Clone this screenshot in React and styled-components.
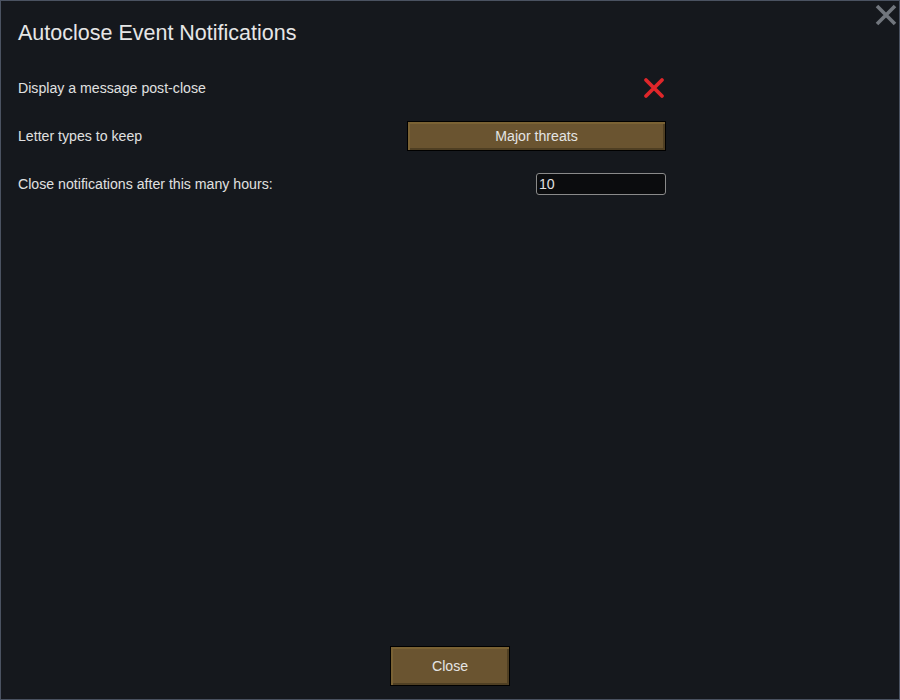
import React from "react";
import styled, { createGlobalStyle } from "styled-components";

const Global = createGlobalStyle`
  html, body { margin: 0; padding: 0; background: #15181d; }
  body { font-family: "Liberation Sans", Arial, sans-serif; }
`;

const Window = styled.div`
  position: relative;
  box-sizing: border-box;
  width: 900px;
  height: 700px;
  border: 1px solid #4a5261;
  background: #15181d;
  display: flex;
  flex-direction: column;
  padding: 0 0 13px 17px;
  color: #dedede;
`;

const Title = styled.h1`
  margin: 0;
  height: 63px;
  display: flex;
  align-items: center;
  padding-top: 2px;
  box-sizing: border-box;
  font-size: 21.5px;
  font-weight: normal;
  color: #e6e6e6;
`;

const Rows = styled.div`
  width: 648px;
  display: flex;
  flex-direction: column;
`;

const Row = styled.div`
  height: 48px;
  display: flex;
  align-items: center;
  justify-content: space-between;
`;

const Label = styled.span`
  font-size: 14.15px;
  color: #e0e0e0;
`;

const WoodButton = styled.button`
  box-sizing: border-box;
  width: ${(p) => p.$w}px;
  height: ${(p) => p.$h}px;
  border: 1px solid #000;
  background: #6a5430;
  box-shadow: inset 2px 2px 0 #7a6234, inset -2px -2px 0 #4f3f23;
  color: #e4e4e4;
  font-family: "Liberation Sans", Arial, sans-serif;
  font-size: 14.15px;
  padding: 0;
  cursor: pointer;
`;

const Input = styled.div`
  box-sizing: border-box;
  width: 130px;
  height: 22px;
  border: 1px solid #8a8a8a;
  border-radius: 3px;
  background: #0b0c0e;
  color: #e0e0e0;
  font-size: 14.15px;
  display: flex;
  align-items: center;
  padding-left: 2px;
`;

const Spacer = styled.div`
  flex: 1;
`;

const Footer = styled.div`
  display: flex;
  justify-content: center;
  margin-left: -17px;
`;

const CloseIcon = styled.svg`
  position: absolute;
  top: 3px;
  right: 2px;
`;

const CrossIcon = styled.svg`
  margin-right: 1px;
  display: block;
`;

export default function App() {
  return (
    <>
      <Global />
      <Window>
        <CloseIcon width="22" height="22" viewBox="0 0 22 22">
          <path d="M2 2 L20 20 M20 2 L2 20" stroke="#71767d" strokeWidth="3.6" />
        </CloseIcon>
        <Title>Autoclose Event Notifications</Title>
        <Rows>
          <Row>
            <Label>Display a message post-close</Label>
            <CrossIcon width="22" height="22" viewBox="0 0 22 22">
              <path d="M3 3 L19 19 M19 3 L3 19" stroke="#e0262a" strokeWidth="3.8" strokeLinecap="round" />
            </CrossIcon>
          </Row>
          <Row>
            <Label>Letter types to keep</Label>
            <WoodButton $w={259} $h={30}>Major threats</WoodButton>
          </Row>
          <Row>
            <Label>Close notifications after this many hours:</Label>
            <Input>10</Input>
          </Row>
        </Rows>
        <Spacer />
        <Footer>
          <WoodButton $w={120} $h={40}>Close</WoodButton>
        </Footer>
      </Window>
    </>
  );
}
